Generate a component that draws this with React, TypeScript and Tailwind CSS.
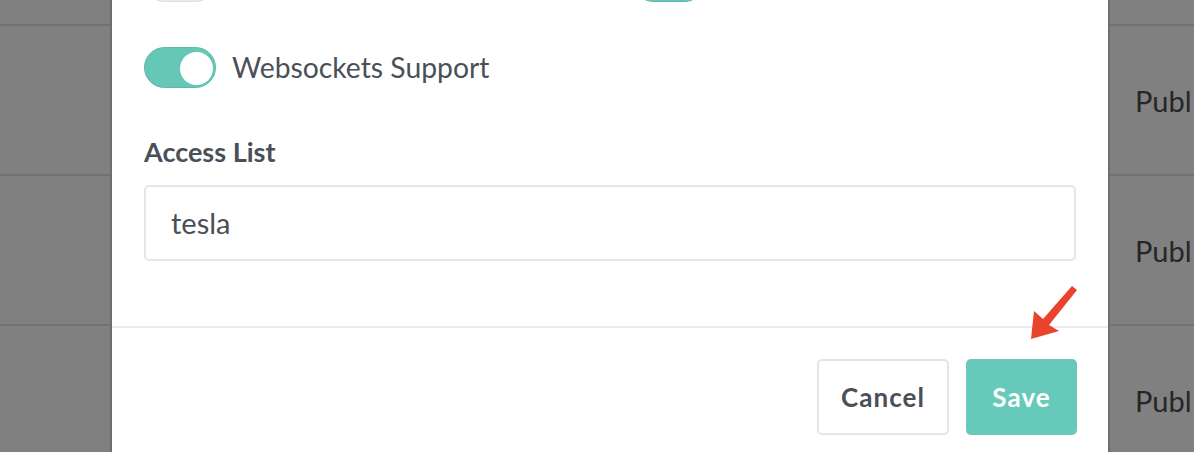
import React from "react";

function Toggle({ on }: { on: boolean }) {
  return (
    <div
      className={
        on
          ? "relative w-[72px] h-[41px] rounded-full bg-[#67c7b7] border border-[#5db9aa] shrink-0"
          : "relative w-[72px] h-[41px] rounded-full bg-[#e9ecef] border border-[#dcdfe3] shrink-0"
      }
    >
      <div
        className={
          on
            ? "absolute right-[2px] top-[4px] w-[33px] h-[33px] rounded-full bg-white"
            : "absolute left-[2px] top-[4px] w-[33px] h-[33px] rounded-full bg-white"
        }
      />
    </div>
  );
}

function BgRow() {
  return (
    <div className="h-[150px] border-b-2 border-[#727272] flex items-center shrink-0">
      <div className="ml-[1135px] w-[56px] text-[29px] text-[#262626] leading-none overflow-hidden whitespace-nowrap">
        Public
      </div>
    </div>
  );
}

export default function App() {
  return (
    <div
      className="relative w-[1194px] h-[452px] overflow-hidden bg-[#808080]"
      style={{ fontFamily: "Lato, 'Noto Sans', sans-serif" }}
    >
      {/* page behind overlay */}
      <div className="flex flex-col mt-[-124px]">
        <BgRow />
        <BgRow />
        <BgRow />
        <BgRow />
      </div>

      {/* modal */}
      <div className="absolute left-[110px] top-0 w-[1000px] h-[452px] bg-white border-x-2 border-[#6e6e6e] flex flex-col">
        <div className="px-[32px] flex flex-col">
          <div className="flex mt-[-39px] h-[41px]">
            <Toggle on={false} />
            <div className="ml-[417px]">
              <Toggle on={true} />
            </div>
          </div>
          <div className="flex items-center mt-[45px] h-[41px]">
            <Toggle on={true} />
            <span className="ml-[16px] text-[28.3px] text-[#495057] leading-none">
              Websockets Support
            </span>
          </div>
          <div className="mt-[50px] text-[27px] font-bold text-[#495057] leading-none">
            Access List
          </div>
          <div className="mt-[20px] h-[76px] rounded-[5px] border-2 border-[#e3e5e8] flex items-center px-[25px] text-[29px] text-[#495057]">
            tesla
          </div>
        </div>
        <div className="mt-[65px] border-t-2 border-[#e9ecef]" />
        <div className="flex justify-end gap-[17px] pt-[31px] pr-[31px]">
          <button className="w-[132px] h-[76px] rounded-[5px] border-2 border-[#e3e5e8] bg-white text-[26px] font-bold text-[#495057] tracking-[0.04em]">
            Cancel
          </button>
          <button className="w-[111px] h-[76px] rounded-[5px] bg-[#67c9b9] text-[26px] font-bold text-white tracking-[0.04em]">
            Save
          </button>
        </div>
      </div>

      {/* annotation arrow */}
      <svg className="absolute left-0 top-0 pointer-events-none" width="1194" height="452">
        <polygon
          points="1031,339 1034,311 1043,319 1072,286 1077,290 1049,325 1059,331"
          fill="#e9432c"
        />
      </svg>
    </div>
  );
}
